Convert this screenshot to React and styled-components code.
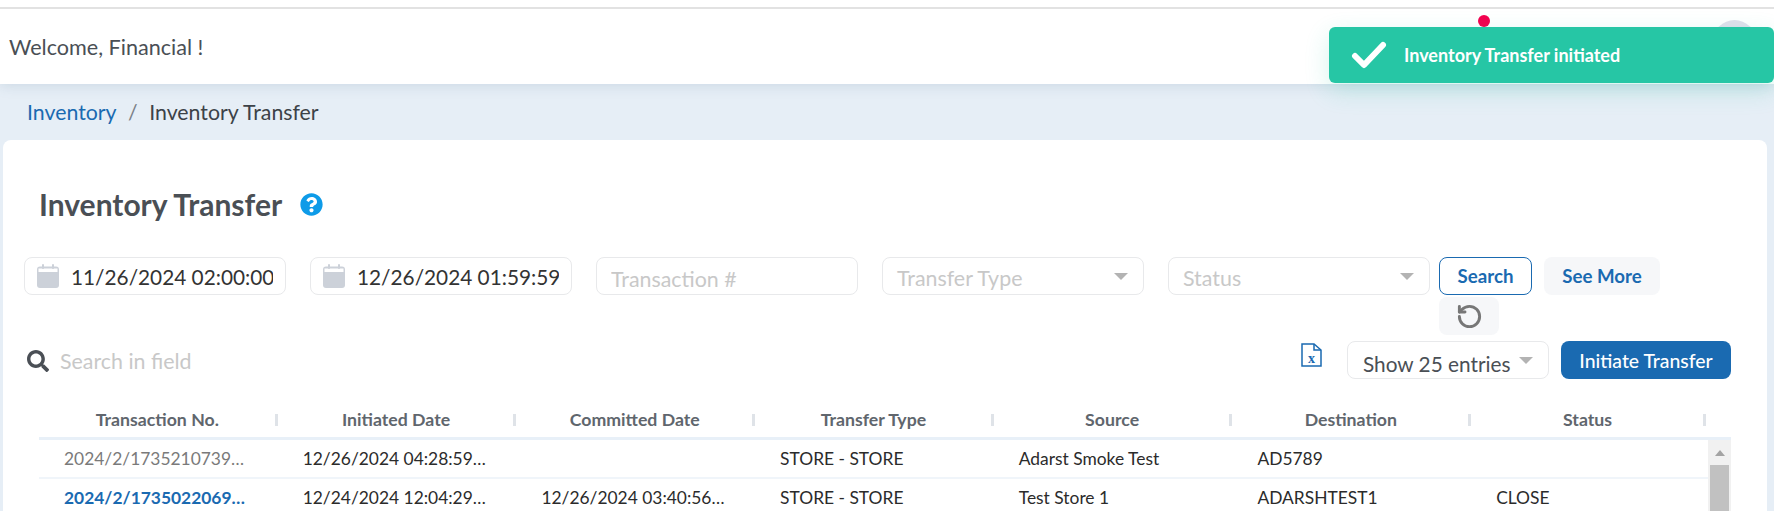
import React from 'react';
import styled, { createGlobalStyle } from 'styled-components';
import { RotateCcw } from 'lucide-react';
import { FaQuestionCircle, FaSearch } from 'react-icons/fa';

const GlobalStyle = createGlobalStyle`
  html, body {
    margin: 0;
    height: 511px;
    overflow: hidden;
    background: #e6eef6;
    font-family: Lato, "Open Sans", sans-serif;
  }
`;

const columns = ['Transaction No.', 'Initiated Date', 'Committed Date', 'Transfer Type', 'Source', 'Destination', 'Status'];

const rows = [
  { id: '2024/2/1735210739…', initiated: '12/26/2024 04:28:59…', committed: '', type: 'STORE - STORE', source: 'Adarst Smoke Test', destination: 'AD5789', status: '' },
  { id: '2024/2/1735022069…', link: true, initiated: '12/24/2024 12:04:29…', committed: '12/26/2024 03:40:56…', type: 'STORE - STORE', source: 'Test Store 1', destination: 'ADARSHTEST1', status: 'CLOSE' },
];

const CalendarIcon = () => (
  <svg width="22" height="24" viewBox="0 0 22 24" fill="none">
    <rect x="0" y="2.5" width="22" height="21.5" rx="3" fill="#ccd1d9" />
    <rect x="1.5" y="4.5" width="19" height="3.5" fill="#fff" />
    <rect x="5" y="0" width="2" height="5" rx="1" fill="#ccd1d9" />
    <rect x="15" y="0" width="2" height="5" rx="1" fill="#ccd1d9" />
  </svg>
);

const ExcelIcon = () => (
  <svg width="21" height="24" viewBox="0 0 21 24" fill="none" stroke="#1a6ab1" strokeWidth="1.5">
    <path d="M1 1h12l7 6v16H1z" />
    <path d="M13 1v6h7" />
    <text x="10.5" y="20" textAnchor="middle" fontFamily="Liberation Serif, serif" fontSize="14" fontWeight="700" fill="#1a6ab1" stroke="none">x</text>
  </svg>
);

const CheckIcon = () => (
  <svg width="36" height="28" viewBox="0 0 36 28" fill="none">
    <path d="M4 15l9 9L32 4" stroke="#fff" strokeWidth="6" strokeLinecap="round" strokeLinejoin="round" />
  </svg>
);

export default function App() {
  return (
    <Page>
      <GlobalStyle />
      <Header>
        <Welcome>Welcome, Financial !</Welcome>
        <HeaderRight>
          <NotificationDot />
          <Avatar />
        </HeaderRight>
      </Header>
      <Toast>
        <CheckIcon />
        <ToastText>Inventory Transfer initiated</ToastText>
      </Toast>
      <Breadcrumb>
        <Crumb>Inventory</Crumb>
        <Slash>/</Slash>
        <span>Inventory Transfer</span>
      </Breadcrumb>
      <Card>
        <TitleRow>
          <Title>Inventory Transfer</Title>
          <FaQuestionCircle color="#0e9be8" size={23} />
        </TitleRow>
        <Filters>
          <FilterFields>
            <Field>
              <CalendarIcon />
              <FieldInput readOnly value="11/26/2024 02:00:00" />
            </Field>
            <Field>
              <CalendarIcon />
              <FieldInput readOnly value="12/26/2024 01:59:59" />
            </Field>
            <Field>
              <FieldInput placeholder="Transaction #" />
            </Field>
            <Field>
              <Placeholder>Transfer Type</Placeholder>
              <Caret />
            </Field>
            <Field>
              <Placeholder>Status</Placeholder>
              <Caret />
            </Field>
          </FilterFields>
          <FilterActions>
            <SearchButton>Search</SearchButton>
            <SoftButton>See More</SoftButton>
            <ResetButton aria-label="Reset">
              <RotateCcw size={27} color="#777" strokeWidth={2.6} />
            </ResetButton>
          </FilterActions>
        </Filters>
        <Toolbar>
          <FieldSearch>
            <FaSearch size={22} color="#4a4f55" />
            <SearchInput placeholder="Search in field" />
          </FieldSearch>
          <ToolbarRight>
            <ExportLink>
              <ExcelIcon />
            </ExportLink>
            <EntriesSelect>
              <span>Show 25 entries</span>
              <Caret />
            </EntriesSelect>
            <PrimaryButton>Initiate Transfer</PrimaryButton>
          </ToolbarRight>
        </Toolbar>
        <Table>
          <HeadRow>
            {columns.map((name) => (
              <HeadCell key={name}>{name}</HeadCell>
            ))}
          </HeadRow>
          <TableBody>
            <BodyRows>
              {rows.map((row) => (
                <Row key={row.id}>
                  <IdCell $link={row.link}>{row.id}</IdCell>
                  <Cell>{row.initiated}</Cell>
                  <Cell>{row.committed}</Cell>
                  <Cell>{row.type}</Cell>
                  <Cell>{row.source}</Cell>
                  <Cell>{row.destination}</Cell>
                  <Cell>{row.status}</Cell>
                </Row>
              ))}
            </BodyRows>
            <Scrollbar>
              <ScrollArrow />
              <ScrollThumb />
            </Scrollbar>
          </TableBody>
        </Table>
      </Card>
    </Page>
  );
}

const Page = styled.div`
  position: relative;
  height: 511px;
  overflow: hidden;
  background: #e6eef6;
`;

const Header = styled.header`
  position: relative;
  display: flex;
  justify-content: space-between;
  align-items: center;
  box-sizing: border-box;
  height: 84px;
  padding: 9px 18px 0 9px;
  background: #fff;
  box-shadow: 0 2px 12px rgba(90, 120, 150, 0.18);

  &::before {
    content: '';
    position: absolute;
    top: 7px;
    left: 0;
    right: 0;
    height: 2px;
    background: #e2e2e2;
  }
`;

const Welcome = styled.div`
  font-size: 21.6px;
  color: #4a4f55;
`;

const HeaderRight = styled.div`
  display: flex;
  align-items: flex-start;
  gap: 223px;
  align-self: flex-start;
  padding-top: 6px;
`;

const NotificationDot = styled.span`
  width: 12px;
  height: 12px;
  border-radius: 50%;
  background: #f5004f;
`;

const Avatar = styled.span`
  width: 43px;
  height: 43px;
  margin-top: 5px;
  border-radius: 50%;
  background: #e0e0ec;
`;

const Toast = styled.div`
  position: absolute;
  top: 27px;
  left: 1329px;
  right: 0;
  display: flex;
  align-items: center;
  gap: 17px;
  box-sizing: border-box;
  height: 56px;
  padding-left: 22px;
  border-radius: 6px;
  background: #26c6a5;
  box-shadow: 0 8px 24px rgba(38, 198, 165, 0.2);
`;

const ToastText = styled.span`
  font-size: 18px;
  font-weight: 700;
  color: #fff;
`;

const Breadcrumb = styled.nav`
  display: flex;
  align-items: center;
  box-sizing: border-box;
  height: 56px;
  padding: 0 0 0 27px;
  font-size: 21.3px;
  color: #3c4248;
`;

const Crumb = styled.a`
  color: #1a6ab1;
`;

const Slash = styled.span`
  margin: 0 11.5px;
  color: #7b8087;
`;

const Card = styled.main`
  box-sizing: border-box;
  height: 371px;
  margin: 0 7px 0 3px;
  padding: 42px 36px 0 21px;
  border-radius: 8px 8px 0 0;
  background: #fff;
`;

const TitleRow = styled.div`
  display: flex;
  align-items: center;
  gap: 18px;
  height: 44px;
  margin: 0 0 31px 15px;
`;

const Title = styled.h1`
  margin: 0;
  font-size: 30px;
  font-weight: 700;
  color: #4a4f55;
`;

const Filters = styled.div`
  display: flex;
  align-items: flex-start;
  gap: 9px;
`;

const FilterFields = styled.div`
  display: flex;
  gap: 24px;
`;

const Field = styled.div`
  display: flex;
  align-items: center;
  gap: 12px;
  box-sizing: border-box;
  width: 262px;
  height: 38px;
  padding: 0 15px 0 12px;
  border: 1px solid #e8e9eb;
  border-radius: 8px;
  background: #fff;

  > input:not(:first-child) {
    margin-right: -3px;
    padding-top: 1px;
  }
`;

const FieldInput = styled.input`
  flex: 1;
  min-width: 0;
  padding: 0;
  border: 0;
  outline: 0;
  font: 20.8px Lato, sans-serif;
  color: #333;
  background: transparent;

  &::placeholder {
    font-size: 21.4px;
    color: #c8c8c8;
    opacity: 1;
  }

  &:first-child {
    padding: 4px 0 0 2px;
  }
`;

const Placeholder = styled.span`
  flex: 1;
  padding: 4px 0 0 2px;
  font-size: 21.4px;
  color: #c8c8c8;
`;

const Caret = styled.span`
  width: 0;
  height: 0;
  border-left: 7px solid transparent;
  border-right: 7px solid transparent;
  border-top: 7px solid #b3b3b3;
`;

const FilterActions = styled.div`
  display: flex;
  flex-wrap: wrap;
  align-content: flex-start;
  gap: 2px 12px;
  width: 225px;
`;

const SearchButton = styled.button`
  box-sizing: border-box;
  width: 93px;
  height: 38px;
  padding: 0;
  border: 1px solid #1a6ab1;
  border-radius: 8px;
  background: #fff;
  font: 700 18.7px Lato, sans-serif;
  color: #1a6ab1;
`;

const SoftButton = styled.button`
  width: 116px;
  height: 38px;
  padding: 0;
  border: 0;
  border-radius: 8px;
  background: #f6f7f9;
  font: 700 18.7px Lato, sans-serif;
  color: #1a6ab1;
`;

const ResetButton = styled.button`
  display: flex;
  align-items: center;
  justify-content: center;
  width: 60px;
  height: 38px;
  padding: 0;
  border: 0;
  border-radius: 8px;
  background: #f6f7f9;
`;

const Toolbar = styled.div`
  display: flex;
  justify-content: space-between;
  align-items: flex-start;
  height: 38px;
  margin-top: 6px;
`;

const FieldSearch = styled.div`
  display: flex;
  align-items: center;
  gap: 11px;
  height: 40px;
  padding-left: 3px;
`;

const SearchInput = styled.input`
  width: 220px;
  padding: 0;
  border: 0;
  outline: 0;
  font: 21.4px Lato, sans-serif;

  &::placeholder {
    color: #c8c8c8;
    opacity: 1;
  }
`;

const ToolbarRight = styled.div`
  display: flex;
  align-items: flex-start;
  gap: 12px;
`;

const ExportLink = styled.a`
  display: flex;
  margin: 2px 13px 0 0;
`;

const EntriesSelect = styled.div`
  display: flex;
  align-items: center;
  justify-content: space-between;
  box-sizing: border-box;
  width: 202px;
  height: 38px;
  padding: 6px 15px 0 15px;
  border: 1px solid #e8e9eb;
  border-radius: 8px;
  font-size: 20.8px;
  color: #4a4f55;

  ${Caret} {
    margin-top: -5px;
  }
`;

const PrimaryButton = styled.button`
  width: 170px;
  height: 38px;
  padding: 0;
  border: 0;
  border-radius: 8px;
  background: #1a6ab1;
  font: 500 19.4px Lato, sans-serif;
  color: #fff;
`;

const Table = styled.div`
  margin-left: 15px;
`;

const HeadRow = styled.div`
  display: grid;
  grid-template-columns: repeat(6, 238.7px) 1fr;
  box-sizing: border-box;
  height: 61px;
  padding-right: 25px;
  border-bottom: 3px solid #e8f0f8;
`;

const HeadCell = styled.div`
  position: relative;
  padding: 30px 2px 0 0;
  text-align: center;
  font-size: 17.7px;
  font-weight: 700;
  line-height: 21px;
  color: #60666d;

  &::after {
    content: '';
    position: absolute;
    top: 35px;
    right: 0;
    width: 3px;
    height: 12px;
    background: #dfe3e8;
  }
`;

const TableBody = styled.div`
  display: flex;
  height: 71px;
  overflow: hidden;
`;

const BodyRows = styled.div`
  flex: 1;
`;

const Row = styled.div`
  display: grid;
  grid-template-columns: repeat(6, 238.7px) 1fr;
  align-items: center;
  box-sizing: border-box;
  height: 39px;
  border-bottom: 2px solid #f0f5fa;
`;

const Cell = styled.div`
  padding-left: 25px;
  font-size: 17.4px;
  white-space: nowrap;
  color: #2b2b2b;
`;

const IdCell = styled(Cell)`
  font-weight: ${(p) => (p.$link ? 700 : 400)};
  color: ${(p) => (p.$link ? '#1a6ab1' : '#7a7a7a')};
`;

const Scrollbar = styled.div`
  flex: none;
  box-sizing: border-box;
  width: 23px;
  padding: 0 2px;
  background: #f1f1f1;
`;

const ScrollArrow = styled.div`
  width: 0;
  height: 0;
  margin: 10px auto 9px;
  border-left: 5px solid transparent;
  border-right: 5px solid transparent;
  border-bottom: 6px solid #a3a3a3;
`;

const ScrollThumb = styled.div`
  height: 200px;
  background: #c1c1c1;
`;
